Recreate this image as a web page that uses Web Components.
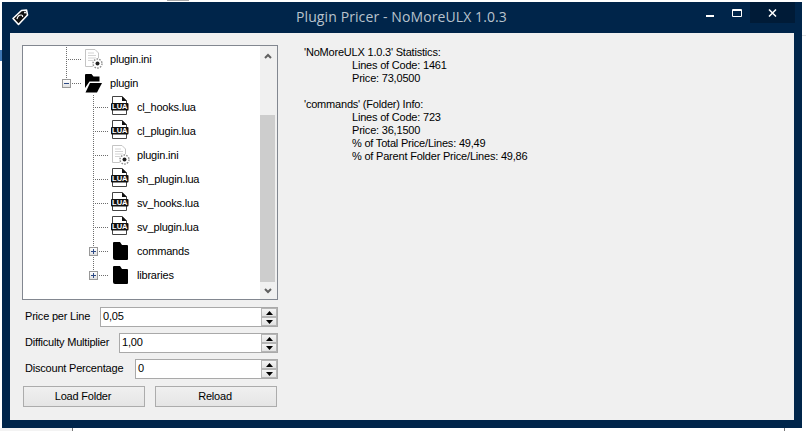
<!DOCTYPE html>
<html>
<head>
<meta charset="utf-8">
<title>Plugin Pricer</title>
<style>
  html, body { margin: 0; height: 100%; background: #fff; overflow: hidden; }
  body { font: 11px/13px "Liberation Sans", Arial, sans-serif; letter-spacing: -0.2px; color: #000; }
</style>
</head>
<body>
<app-window heading="Plugin Pricer - NoMoreULX 1.0.3">
  <folder-tree>
    <tree-row kind="ini" label="plugin.ini" depth="0" line="through"></tree-row>
    <tree-row kind="open" label="plugin" depth="0" toggle="-" line="up"></tree-row>
    <tree-row kind="lua" label="cl_hooks.lua" depth="1" line="through"></tree-row>
    <tree-row kind="lua" label="cl_plugin.lua" depth="1" line="through"></tree-row>
    <tree-row kind="ini" label="plugin.ini" depth="1" line="through"></tree-row>
    <tree-row kind="lua" label="sh_plugin.lua" depth="1" line="through"></tree-row>
    <tree-row kind="lua" label="sv_hooks.lua" depth="1" line="through"></tree-row>
    <tree-row kind="lua" label="sv_plugin.lua" depth="1" line="through"></tree-row>
    <tree-row kind="folder" label="commands" depth="1" toggle="+" line="through"></tree-row>
    <tree-row kind="folder" label="libraries" depth="1" toggle="+" line="up"></tree-row>
  </folder-tree>
  <spin-field label="Price per Line" value="0,05" labelwidth="78"></spin-field>
  <spin-field label="Difficulty Multiplier" value="1,00" labelwidth="97"></spin-field>
  <spin-field label="Discount Percentage" value="0" labelwidth="113"></spin-field>
  <div slot="buttons" style="display:flex;gap:10px;margin:7px 0 0 1px">
    <push-button>Load Folder</push-button>
    <push-button>Reload</push-button>
  </div>
  <stats-block slot="stats" heading="'NoMoreULX 1.0.3' Statistics:">
    <div>Lines of Code: 1461</div>
    <div>Price: 73,0500</div>
  </stats-block>
  <stats-block slot="stats" heading="'commands' (Folder) Info:">
    <div>Lines of Code: 723</div>
    <div>Price: 36,1500</div>
    <div>% of Total Price/Lines: 49,49</div>
    <div>% of Parent Folder Price/Lines: 49,86</div>
  </stats-block>
</app-window>

<script>
// icons are plain svg strings, one per tree row kind
const ICONS = {
  ini: `<svg width="20" height="20" viewBox="0 0 20 20">
    <path d="M1.5 .5H11L14.5 4V17.5H1.5Z" fill="#fff" stroke="#c4c4c4"/>
    <path d="M4 4H10M4 6.5H12M4 9H12M4 11.5H9" stroke="#d4d4d4"/>
    <circle cx="13.5" cy="14.5" r="5.5" fill="#fff"/>
    <circle cx="13.5" cy="14.5" r="4.5" fill="none" stroke="#8f8f8f" stroke-width="1.4" stroke-dasharray="1.6 1.2"/>
    <circle cx="13.5" cy="14.5" r="2" fill="#222"/>
  </svg>`,
  lua: `<svg width="18" height="20" viewBox="0 0 18 20" style="margin-bottom:2px">
    <path d="M1.5 .5H11L15.5 5V18.5H1.5Z" fill="#fff" stroke="#444"/>
    <path d="M11 0L16 5H11Z" fill="#111"/>
    <rect x="0" y="7" width="17.5" height="7.5" rx="1" fill="#111"/>
    <text x="8.8" y="13.4" text-anchor="middle" font-family="Liberation Sans" font-weight="bold" font-size="7.5" letter-spacing="0" fill="#fff">LUA</text>
  </svg>`,
  folder: `<svg width="18" height="20" viewBox="0 0 18 20">
    <path d="M3 1H9L11 4H16Q17 4 17 5V18Q17 19 16 19H4Q2 19 2 17V2Q2 1 3 1Z" fill="#000"/>
  </svg>`,
  open: `<svg width="20" height="20" viewBox="0 0 20 20">
    <path d="M1 2Q1 1 2 1H7.5L9.5 3.5H15.5V8.5H5.5L1 15Z" fill="#000"/>
    <path d="M6 10H18L13 19.5H1.5Z" fill="#000"/>
  </svg>`
};

class AppWindow extends HTMLElement {
  connectedCallback() {
    const root = this.attachShadow({ mode: 'open' });
    root.innerHTML = `
      <style>
        :host { display: block; position: relative; width: 800px; height: 426px; margin: 2px 0 0 2px; background: #00254a; box-sizing: border-box; padding: 0 8px 8px; }
        .bar { height: 31px; display: flex; align-items: center; }
        .logo { margin: 0 0 2px 1px; width: 18px; height: 18px; flex: none; }
        .title { flex: 1; text-align: center; font: 14px/20px "Open Sans", sans-serif; letter-spacing: .1px; color: #b9c3cd; padding: 0 0 2px 78px; }
        .caps { display: flex; height: 21px; align-self: flex-start; margin-right: -1px; }
        .caps div { display: flex; align-items: center; justify-content: center; }
        .min { width: 28px; } .max { width: 26px; }
        .close { width: 45px; background: #001b37; }
        .client { height: 387px; background: #f0f0f0; box-sizing: border-box; padding: 12px; display: flex; gap: 26px; }
        .left { width: 256px; flex: none; }
        .right { padding-top: 1px; }
        .behind { position: absolute; }
      </style>
      <div class="bar">
        <svg class="logo" viewBox="0 0 18 18">
          <path d="M2 10.5L10.5 2.5L15.5 2L16.5 7L7.5 16.5Z" fill="#111" stroke="#fff" stroke-width="1.6" stroke-linejoin="round"/>
          <path d="M6 11Q7 7 10 7Q12 7 11.5 9" fill="none" stroke="#fff" stroke-width="1.2"/>
          <circle cx="14" cy="4.5" r="1" fill="#fff"/>
        </svg>
        <div class="title">${this.getAttribute('heading')}</div>
        <div class="caps">
          <div class="min"><svg width="8" height="3" viewBox="0 0 8 3" style="margin-top:8px"><rect width="8" height="2" fill="#fff"/></svg></div>
          <div class="max"><svg width="10" height="8" viewBox="0 0 10 8" style="margin-top:1px"><path d="M.5 .5H9.5V7.5H.5Z" fill="none" stroke="#fff"/><path d="M0 1.5H10" stroke="#fff"/></svg></div>
          <div class="close"><svg width="9" height="8" viewBox="0 0 9 8" style="margin-top:1px"><path d="M1 .5L8 7.5M8 .5L1 7.5" stroke="#fff" stroke-width="1.5"/></svg></div>
        </div>
      </div>
      <div class="client">
        <div class="left">
          <slot></slot>
          <slot name="buttons"></slot>
        </div>
        <div class="right"><slot name="stats"></slot></div>
      </div>
      <!-- bits of the desktop showing around the window -->
      <div class="behind" style="left:165px;top:-2px;width:22px;height:1px;background:#a8a8a8"></div>
      <div class="behind" style="left:-2px;top:48px;width:2px;height:11px;background:#3f78b5"></div>
      <div class="behind" style="left:-2px;top:426px;width:72px;height:3px;background:#f3f3f3"></div>
      <div class="behind" style="left:70px;top:426px;width:1px;height:3px;background:#777"></div>
      <div class="behind" style="left:782px;top:426px;width:1px;height:3px;background:#777"></div>
      <div class="behind" style="left:800px;top:33px;width:4px;height:1px;background:#e4e4e4"></div>`;
  }
}

class FolderTree extends HTMLElement {
  connectedCallback() {
    const root = this.attachShadow({ mode: 'open' });
    root.innerHTML = `
      <style>
        :host { display: flex; width: 256px; height: 255px; box-sizing: border-box; border: 1px solid #828790; background: #fff; margin-bottom: 7px; }
        .rows { flex: 1; padding-top: 1px; overflow: hidden; }
        .sb { width: 17px; background: #f0f0f0; display: flex; flex-direction: column; }
        .arrow { height: 17px; padding-right: 1px; display: flex; align-items: center; justify-content: center; }
        .track { flex: 1; padding-top: 51px; box-sizing: border-box; }
        .thumb { height: 100%; background: #cdcdcd; margin-right: 2px; }
      </style>
      <div class="rows"><slot></slot></div>
      <div class="sb">
        <div class="arrow" style="margin-top:1px"><svg width="8" height="6" viewBox="0 0 8 6"><path d="M1 5L4 2L7 5" fill="none" stroke="#606060" stroke-width="2"/></svg></div>
        <div class="track"><div class="thumb"></div></div>
        <div class="arrow"><svg width="8" height="6" viewBox="0 0 8 6"><path d="M1 1L4 4L7 1" fill="none" stroke="#606060" stroke-width="2"/></svg></div>
      </div>`;
  }
}

class TreeRow extends HTMLElement {
  connectedCallback() {
    const depth = Number(this.getAttribute('depth'));
    const line = this.getAttribute('line');
    const toggle = this.getAttribute('toggle');
    const root = this.attachShadow({ mode: 'open' });
    root.innerHTML = `
      <style>
        :host { display: flex; height: 24px; align-items: stretch; color: #000; }
        .conn { flex: none; width: 18px; position: relative; margin-left: ${depth ? 70 : 43}px;
          background:
            repeating-linear-gradient(90deg, #6d6d6d 0 1px, transparent 1px 2px) 0 12px / 15px 1px no-repeat,
            repeating-linear-gradient(180deg, #6d6d6d 0 1px, transparent 1px 2px) 0 0 / 1px ${line === 'up' ? '12px' : '100%'} no-repeat; }
        .toggle { position: absolute; left: -4px; top: 8px; width: 9px; height: 9px; box-sizing: border-box; border: 1px solid #989898; background: linear-gradient(#fff, #e0e0e0); display: flex; align-items: center; justify-content: center; }
        .icon { flex: none; width: 26px; display: flex; align-items: center; }
        .icon svg { display: block; }
        .label { align-self: center; }
      </style>
      <div class="conn">${toggle ? `<div class="toggle"><svg width="7" height="7" viewBox="0 0 7 7"><path d="M1 3.5H6${toggle === '+' ? 'M3.5 1V6' : ''}" stroke="#2d4a85"/></svg></div>` : ''}</div>
      <div class="icon">${ICONS[this.getAttribute('kind')]}</div>
      <div class="label">${this.getAttribute('label')}</div>`;
  }
}

class SpinField extends HTMLElement {
  connectedCallback() {
    const root = this.attachShadow({ mode: 'open' });
    root.innerHTML = `
      <style>
        :host { display: flex; align-items: center; height: 20px; margin-bottom: 6px; }
        .lab { box-sizing: border-box; width: ${this.getAttribute('labelwidth')}px; padding: 0 0 2px 3px; white-space: nowrap; }
        .box { flex: 1; height: 20px; box-sizing: border-box; border: 1px solid #a9a9a9; background: #fff; display: flex; align-items: center; }
        .val { flex: 1; padding: 0 0 2px 2px; }
        .spin { width: 16px; height: 18px; display: flex; flex-direction: column; }
        .spin div { flex: 1; background: linear-gradient(#f4f4f4, #e2e2e2); border: 1px solid #b5b5b5; display: flex; align-items: center; justify-content: center; }
      </style>
      <div class="lab">${this.getAttribute('label')}</div>
      <div class="box">
        <div class="val">${this.getAttribute('value')}</div>
        <div class="spin">
          <div><svg width="7" height="4" viewBox="0 0 7 4"><path d="M3.5 0L7 4H0Z" fill="#000"/></svg></div>
          <div><svg width="7" height="4" viewBox="0 0 7 4"><path d="M0 0H7L3.5 4Z" fill="#000"/></svg></div>
        </div>
      </div>`;
  }
}

class PushButton extends HTMLElement {
  connectedCallback() {
    const root = this.attachShadow({ mode: 'open' });
    root.innerHTML = `
      <style>
        :host { display: flex; width: 122px; height: 21px; box-sizing: border-box; border: 1px solid #acacac; padding-right: 2px; background: linear-gradient(#f0f0f0, #e5e5e5); align-items: center; justify-content: center; }
      </style>
      <slot></slot>`;
  }
}

class StatsBlock extends HTMLElement {
  connectedCallback() {
    const root = this.attachShadow({ mode: 'open' });
    root.innerHTML = `
      <style>
        :host { display: block; margin-bottom: 13px; }
        .items { padding-left: 48px; }
      </style>
      <div>${this.getAttribute('heading')}</div>
      <div class="items"><slot></slot></div>`;
  }
}

customElements.define('app-window', AppWindow);
customElements.define('folder-tree', FolderTree);
customElements.define('tree-row', TreeRow);
customElements.define('spin-field', SpinField);
customElements.define('push-button', PushButton);
customElements.define('stats-block', StatsBlock);
</script>
</body>
</html>
